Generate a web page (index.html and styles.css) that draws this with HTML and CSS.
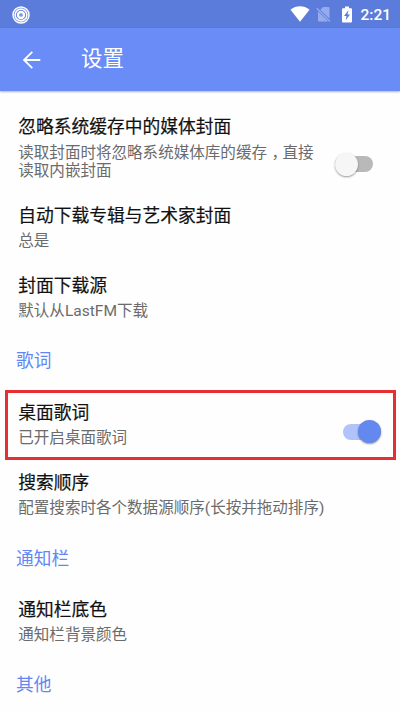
FILE: index.html
```html
<!DOCTYPE html>
<html lang="zh-CN">
<head>
<meta charset="utf-8">
<title>设置</title>
<link rel="stylesheet" href="styles.css">
</head>
<body>
<div class="status">
  <svg class="disc" viewBox="0 0 18 18" width="18" height="18" fill="none" stroke="#fff"><circle cx="9" cy="9" r="8" stroke-width="1.500"/><circle cx="9" cy="9" r="5.900" stroke-width="1.600"/><circle cx="9" cy="9" r="3" stroke-width="2.400"/><circle cx="9" cy="9" r=".6" fill="#fff" stroke="none"/></svg>
  <svg class="wifi" viewBox="0 0 20 16" width="20" height="16"><path fill="#fff" d="M.5 3.800C6-.8 14-.8 19.500 3.800L10 15.700Z"/></svg>
  <svg class="sim" viewBox="0 0 15 17" width="15" height="17"><path fill="#95abed" d="M7 1h5.500q1 0 1 1v10.800L4.300 3.700ZM2 5.300 12.300 15.500H3q-1 0-1-1Z"/><path d="M.8 2.200 14 15.500" stroke="#95abed" stroke-width="1.300"/></svg>
  <svg class="battery" viewBox="0 0 12 17" width="12" height="17"><path fill="#fff" d="M4 .5h4v1.700h2q1 0 1 1V15.500q0 1-1 1H2q-1 0-1-1V3.200q0-1 1-1h2Z"/><path fill="#5b7cdb" d="M7.500 4 3 10h2.500L4.700 14.300 9 8.400H6.500Z"/></svg>
  <span class="clock">2:21</span>
</div>
<header class="bar">
  <svg class="back" viewBox="0 0 20 20" width="20" height="20" fill="none" stroke="#fff" stroke-width="1.800"><path d="M18.300 10H2.500M10.300 1.800 2 10l8.300 8.200"/></svg>
  <h1>设置</h1>
</header>
<main>
  <section class="row">
    <div class="text"><h2>忽略系统缓存中的媒体封面</h2><p>读取封面时将忽略系统媒体库的缓存<span class="comma">，</span>直接<br>读取内嵌封面</p></div>
    <span class="switch"></span>
  </section>
  <section class="row"><div class="text"><h2>自动下载专辑与艺术家封面</h2><p>总是</p></div></section>
  <section class="row"><div class="text"><h2>封面下载源</h2><p>默认从LastFM下载</p></div></section>
  <h3>歌词</h3>
  <section class="row marked">
    <div class="text"><h2>桌面歌词</h2><p>已开启桌面歌词</p></div>
    <span class="switch on"></span>
  </section>
  <section class="row"><div class="text"><h2>搜索顺序</h2><p>配置搜索时各个数据源顺序(长按并拖动排序)</p></div></section>
  <h3>通知栏</h3>
  <section class="row"><div class="text"><h2>通知栏底色</h2><p>通知栏背景颜色</p></div></section>
  <h3>其他</h3>
</main>
</body>
</html>
```

FILE: styles.css
```css
*, *::before, *::after { box-sizing: border-box; }
body {
  margin: 0;
  height: 711px;
  overflow: hidden;
  background: #fefefe;
  font-family: Roboto, "Noto Sans CJK SC", sans-serif;
}
h1, h2, h3, p { margin: 0; font-weight: 400; white-space: nowrap; }
.status {
  display: flex;
  align-items: center;
  height: 28px;
  padding: 0 8.500px 0 11.500px;
  background: #5b7cdb;
}
.disc { margin-top: 1px; }
.wifi { margin-left: auto; }
.sim { margin-left: 6px; }
.battery { margin-left: 10px; }
.clock {
  margin: 2px 0 0 8px;
  width: 31px;
  color: #fff;
  font-size: 15.500px;
  font-weight: 500;
  line-height: 20px;
}
.bar {
  display: flex;
  align-items: center;
  height: 63px;
  padding-left: 22px;
  background: #698cf6;
  box-shadow: 0 1px 2px rgba(0, 0, 0, .3);
}
.bar h1 {
  margin: -1px 0 0 39px;
  color: #fff;
  font-size: 21.500px;
  line-height: 30px;
}
main { padding-top: 11.750px; }
.row {
  display: flex;
  justify-content: space-between;
  padding: 12.250px 18px 12.250px 18.250px;
}
.row:first-child { padding-bottom: 11.250px; }
h2 {
  margin-bottom: 4px;
  color: #111;
  font-size: 17.750px;
  line-height: 24px;
  -webkit-text-stroke: .2px #111;
}
.row:first-child h2 { margin-bottom: 5px; }
p { color: #6b6b6b; font-size: 15.550px; line-height: 18px; }
.comma {
  margin: 0 3.275px 0 4.500px;
  font-family: "Noto Sans CJK SC", sans-serif;
  font-feature-settings: "halt";
  line-height: 1;
}
h3 {
  height: 56.250px;
  padding: 2px 0 0 16px;
  color: #6287f5;
  font-size: 17.700px;
  line-height: 54px;
}
.switch {
  display: flex;
  align-items: center;
  align-self: center;
  width: 38px;
  height: 16px;
  margin: 33px 9px 0 0;
  border-radius: 8px;
  background: #b9b9b9;
}
.switch::before {
  content: "";
  width: 23px;
  height: 23px;
  flex: none;
  border-radius: 50%;
  background: #f6f6f6;
  box-shadow: 0 1px 2px rgba(0, 0, 0, .4);
}
.switch.on {
  justify-content: flex-end;
  margin: 16px 1px 0 0;
  background: #b1c3fa;
}
.switch.on::before { background: #6388ef; }
.marked { position: relative; }
.marked::after {
  content: "";
  position: absolute;
  top: 1px;
  left: 5px;
  width: 391px;
  height: 70px;
  border: 3px solid #e62f34;
}
```
